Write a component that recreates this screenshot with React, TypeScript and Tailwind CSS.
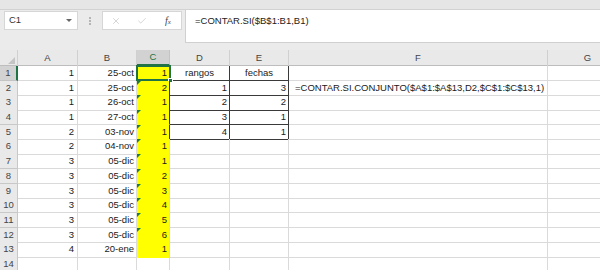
import React from 'react';
import { X, Check } from 'lucide-react';

const colA = [1, 1, 1, 1, 2, 2, 3, 3, 3, 3, 3, 3, 4];
const colB = ['25-oct', '25-oct', '26-oct', '27-oct', '03-nov', '04-nov', '05-dic', '05-dic', '05-dic', '05-dic', '05-dic', '05-dic', '20-ene'];
const colC = [1, 2, 1, 1, 1, 1, 1, 2, 3, 4, 5, 6, 1];
const colD = ['rangos', '1', '2', '3', '4'];
const colE = ['fechas', '3', '2', '1', '1'];
const headers = ['A', 'B', 'C', 'D', 'E', 'F', 'G'];

const grid = 'grid grid-cols-[18px_60px_59px_33px_60px_59px_259px_80px]';

const App: React.FC = () => {
  const rows = Array.from({ length: 14 }, (_, i) => i);

  return (
    <div className="w-[600px] h-[270px] overflow-hidden bg-white font-['Liberation_Sans',Arial,sans-serif] text-[9.5px] text-[#1a1a1a]">
      {/* ribbon edge */}
      <div className="h-[10px] bg-[#e6e6e6] border-b border-[#d2d2d2]" />

      {/* formula bar */}
      <div className="flex h-[33px] bg-[#ebebeb]">
        <div className="flex items-start pl-[4px] pt-[1px]">
          <div className="w-[74px] h-[19px] bg-white border border-[#d6d6d6] flex items-center justify-between pl-[4px] pr-[5px]">
            <span className="text-[#333]">C1</span>
            <span className="w-0 h-0 border-l-[3px] border-r-[3px] border-t-[3px] border-l-transparent border-r-transparent border-t-[#666]" />
          </div>
          <div className="w-[24px] h-[19px] flex flex-col items-center justify-center gap-[1px]">
            <span className="w-[2px] h-[2px] bg-[#b5b5b5]" />
            <span className="w-[2px] h-[2px] bg-[#b5b5b5]" />
            <span className="w-[2px] h-[2px] bg-[#b5b5b5]" />
          </div>
          <div className="w-[80px] h-[19px] bg-white border border-[#d6d6d6] flex items-center pl-[8px] gap-[16px]">
            <X size={10} strokeWidth={1.3} className="text-[#b3b3b3]" />
            <Check size={10} strokeWidth={1.3} className="text-[#b3b3b3]" />
            <span className="font-['Liberation_Serif',serif] italic text-[10px] text-[#444] ml-[2px]">
              f<span className="text-[7px]">x</span>
            </span>
          </div>
        </div>
        <div className="ml-[3px] flex-1 bg-white border-l border-b border-[#d0d0d0] pl-[9px] pt-[4px] text-[9.5px] text-[#222]">
          =CONTAR.SI($B$1:B1,B1)
        </div>
      </div>
      <div className="h-[7px] bg-[#ebebeb]" />

      {/* column headers */}
      <div className={`${grid} h-[16px] bg-[#e9e9e9] border-b border-[#bdbdbd] text-[#444]`}>
        <div className="relative border-r border-[#d0d0d0]">
          <span className="absolute right-[2px] bottom-[2px] w-0 h-0" style={{ borderBottom: '7px solid #c4c4c4', borderLeft: '7px solid transparent' }} />
        </div>
        {headers.map((h) => (
          <div
            key={h}
            className={
              h === 'C'
                ? 'flex items-center justify-center bg-[#d2d2d2] border-r border-[#c4c4c4] border-b-2 border-b-[#217346] text-[#217346]'
                : 'flex items-center justify-center border-r border-[#d0d0d0]'
            }
          >
            {h}
          </div>
        ))}
      </div>

      {/* rows */}
      {rows.map((r) => {
        const inTable = r < 5;
        const dark = 'border-[#3a3a3a]';
        const light = 'border-[#dadada]';
        return (
          <div key={r} className={`${grid} h-[14.7px]`}>
            <div
              className={
                r === 0
                  ? 'flex items-center justify-center bg-[#d2d2d2] border-r-2 border-r-[#217346] border-b border-b-[#c4c4c4] text-[#444]'
                  : 'flex items-center justify-center bg-[#e9e9e9] border-r border-b border-[#c8c8c8] text-[#444]'
              }
            >
              {r + 1}
            </div>
            <div className={`flex items-center justify-end pr-[3px] border-r border-b ${light}`}>{colA[r]}</div>
            <div className={`flex items-center justify-end pr-[2px] border-r border-b ${light}`}>{colB[r]}</div>
            <div
              className={`relative flex items-center justify-end pr-[2px] border-r ${
                inTable ? dark : light
              } ${r < 13 ? 'bg-[#ffff00] border-b border-b-[#ffff00]' : `border-b ${light}`}`}
            >
              {colC[r]}
              {r > 0 && r < 12 && (
                <span className="absolute left-0 top-0 w-0 h-0 border-t-[4px] border-r-[4px] border-t-[#1e7b34] border-r-transparent" />
              )}
              {r === 0 && (
                <>
                  <span className="absolute left-[-1px] top-[-1px] right-[-2px] bottom-[-1px] border-2 border-[#217346]" />
                  <span className="absolute right-[-4px] bottom-[-3px] w-[5px] h-[5px] bg-[#217346] border border-white" />
                </>
              )}
            </div>
            <div
              className={`flex items-center border-r border-b ${inTable ? dark : light} ${
                r === 0 ? 'justify-center' : 'justify-end pr-[2px]'
              }`}
            >
              {colD[r]}
            </div>
            <div
              className={`flex items-center border-r border-b ${inTable ? dark : light} ${
                r === 0 ? 'justify-center' : 'justify-end pr-[2px]'
              }`}
            >
              {colE[r]}
            </div>
            <div className={`flex items-center pl-[6px] whitespace-nowrap border-r border-b ${light}`}>
              {r === 1 ? '=CONTAR.SI.CONJUNTO($A$1:$A$13,D2,$C$1:$C$13,1)' : ''}
            </div>
            <div className={`border-b ${light}`} />
          </div>
        );
      })}
    </div>
  );
};

export default App;
